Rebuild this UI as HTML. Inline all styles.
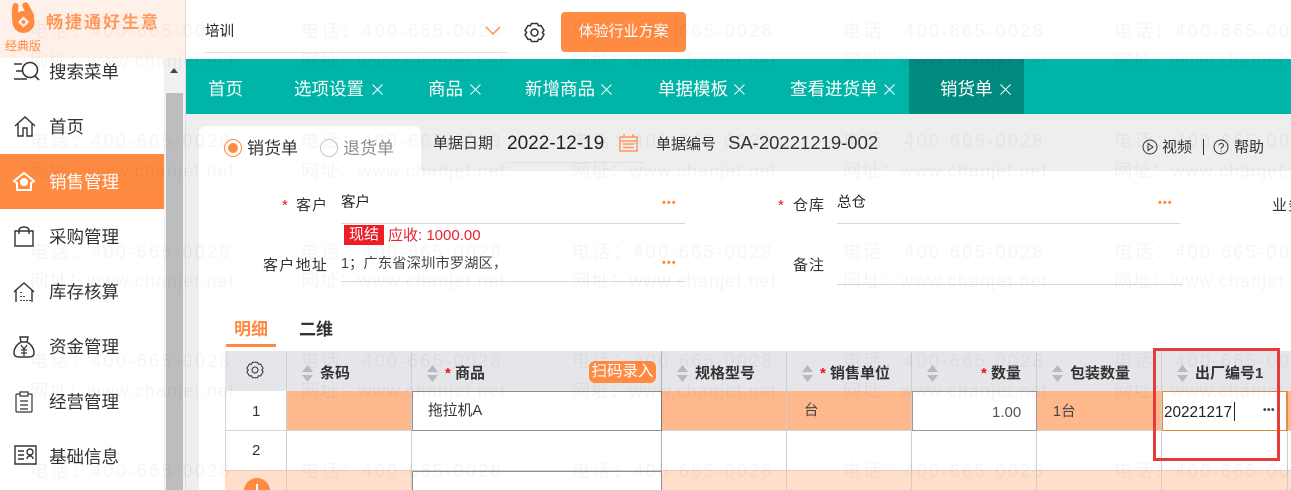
<!DOCTYPE html>
<html lang="zh"><head><meta charset="utf-8"><title>销货单</title>
<style>
*{box-sizing:border-box}
html,body{margin:0;padding:0;width:1291px;height:490px;overflow:hidden;background:#fff}
body{position:relative;font-family:"Liberation Sans","Noto Sans CJK SC",sans-serif;color:#333}
.a{position:absolute}
.t{position:absolute;white-space:nowrap;line-height:1}
.m{position:absolute;left:49px;font-size:17.5px;color:#333;white-space:nowrap;line-height:1}
.ic{position:absolute;fill:none;stroke:#333;stroke-width:1.4}
.tab{position:absolute;top:79px;color:#fff;font-size:17.5px;line-height:20px;white-space:nowrap}
.x{position:absolute;top:84px;fill:none;stroke:#fff;stroke-width:1}
.line{position:absolute;height:1px;background:#d8d8d8}
.dots{position:absolute;color:#ff8a41;font-size:11px;letter-spacing:1px;font-weight:bold;line-height:1}
.hd{position:absolute;top:366px;font-size:15px;font-weight:bold;color:#333;line-height:16px;white-space:nowrap}
.req{color:#f01020;font-weight:bold}
.sort{position:absolute;top:365px;width:11px;height:17px}
.vl{position:absolute;width:1px;background:#d4d4d4}
.wm{position:absolute;color:rgba(0,0,0,.04);font-size:18px;letter-spacing:2.4px;white-space:nowrap;line-height:1}
.wm.w{letter-spacing:1.1px}
.lb{font-size:15px;letter-spacing:1px;color:#333}
</style></head><body>

<!-- sidebar -->
<div class="a" style="left:0;top:0;width:185px;height:58px;background:#fff1e9"></div>
<div class="a" style="left:185px;top:0;width:1px;height:490px;background:#dcdcdc"></div>
<div class="a" style="left:164px;top:58px;width:21px;height:432px;background:#f1f1f1"></div>
<div class="a" style="left:166px;top:93px;width:17px;height:397px;background:#bdbdbd"></div>
<div class="a" style="left:170px;top:68px;width:0;height:0;border-left:4.5px solid transparent;border-right:4.5px solid transparent;border-bottom:5px solid #444"></div>
<div class="a" style="left:0;top:154px;width:164px;height:55px;background:#ff8a41"></div>

<svg class="a" style="left:10px;top:0" width="28" height="36" viewBox="0 0 28 36"><circle cx="13.500" cy="22" r="11" fill="#ff8a41"/><path d="M5.500 6C4.500 11 4.500 16 5.500 23" stroke="#ff8a41" stroke-width="6" stroke-linecap="round" fill="none"/><path d="M15.500 5.500L21 16" stroke="#ff8a41" stroke-width="6.500" stroke-linecap="round" fill="none"/><path d="M13.500 18L17.500 22L13.500 26L9.500 22Z" fill="none" stroke="#fff1e9" stroke-width="2.200"/></svg>
<div class="t" style="left:46px;top:14px;font-size:17px;font-weight:bold;color:#ff9a5c;letter-spacing:2px">畅捷通好生意</div>
<div class="t" style="left:5px;top:40px;font-size:12px;color:#ff8a41">经典版</div>

<svg class="ic" style="left:13px;top:61px" width="27" height="22" viewBox="0 0 27 22"><path d="M1 3H9M3 10H9M1 18H14" stroke-width="1.600"/><circle cx="17" cy="9" r="7.500" stroke-width="1.600"/><path d="M22 15L26 19" stroke-width="1.600"/></svg>
<div class="m" style="top:64px">搜索菜单</div>
<svg class="ic" style="left:14px;top:116px" width="22" height="21" viewBox="0 0 22 21"><path d="M1 10L11 1L21 10M4 8V20H9V12H13V20H18V8"/></svg>
<div class="m" style="top:119px">首页</div>
<svg class="ic" style="left:13px;top:171px;stroke:#fff;stroke-width:2" width="22" height="21" viewBox="0 0 22 21"><path d="M1 10L11 2L21 10L18 12V19H4V12Z"/><circle cx="11" cy="11" r="3.500" fill="#fff" stroke-width="1"/></svg>
<div class="m" style="top:174px;color:#fff">销售管理</div>
<svg class="ic" style="left:14px;top:225px" width="20" height="22" viewBox="0 0 20 22"><path d="M1 6H19V21H1ZM5 9V5C5 1 15 1 15 5V9"/></svg>
<div class="m" style="top:229px">采购管理</div>
<svg class="ic" style="left:13px;top:281px" width="22" height="22" viewBox="0 0 22 22"><path d="M3 21V9L11 2L19 9L21 11M3 9L1 11M19 9V21"/><path d="M8 11V12M8 15V16M8 19V20M11 15V16M11 19V20M14 19V20M17 19V20" stroke-width="1.800"/></svg>
<div class="m" style="top:284px">库存核算</div>
<svg class="ic" style="left:13px;top:336px" width="22" height="22" viewBox="0 0 22 22"><path d="M7 1H15L14 6H8ZM8 6C3 9 1 13 1 17C1 20 3 21 6 21H16C19 21 21 20 21 17C21 13 19 9 14 6"/><path d="M8 9L11 13L14 9M8 14H14M8 17H14M11 13V20" stroke-width="1.200"/></svg>
<div class="m" style="top:339px">资金管理</div>
<svg class="ic" style="left:15px;top:391px" width="18" height="22" viewBox="0 0 18 22"><path d="M5 3H2Q1 3 1 4V20Q1 21 2 21H16Q17 21 17 20V4Q17 3 16 3H13M5 1H13V5H5ZM5 10H13M5 14H13M5 18H13" stroke-width="1.200"/></svg>
<div class="m" style="top:394px">经营管理</div>
<svg class="ic" style="left:14px;top:445px" width="23" height="20" viewBox="0 0 23 20"><path d="M1 1H22V19H1ZM4 6H10M4 10H10M4 14H10M13 14C13 10 19 10 19 14"/><circle cx="16" cy="7" r="3"/></svg>
<div class="m" style="top:449px">基础信息</div>

<!-- top bar -->
<div class="t" style="left:205px;top:25px;font-size:14.500px;color:#222">培训</div>
<div class="line" style="left:205px;top:52px;width:303px;background:#e0e0e8"></div>
<svg class="a" style="left:485px;top:26px" width="16" height="10" viewBox="0 0 16 10" fill="none" stroke="#ff8a41" stroke-width="1.300"><path d="M1 1L8 8L15 1"/></svg>
<svg class="a" style="left:524px;top:22px;fill:none;stroke:#333;stroke-width:1.500" width="21" height="21" viewBox="0 0 21 21"><path d="M7.500 1.500H13.500L14.500 3.800L17 3.500L20 8.500L18.300 10.500L20 12.500L17 17.500L14.500 17.200L13.500 19.500H7.500L6.500 17.200L4 17.500L1 12.500L2.700 10.500L1 8.500L4 3.500L6.500 3.800Z" stroke-linejoin="round"/><circle cx="10.500" cy="10.500" r="3.500"/></svg>
<div class="a" style="left:561px;top:12px;width:125px;height:40px;background:#ff8a41;border-radius:4px;color:#fff;font-size:15px;line-height:40px;text-align:center">体验行业方案</div>

<!-- tabs -->
<div class="a" style="left:186px;top:59px;width:1105px;height:55px;background:#00b5a8"></div>
<div class="a" style="left:909px;top:59px;width:115px;height:55px;background:#008a80"></div>
<div class="tab" style="left:208px">首页</div>
<div class="tab" style="left:294px">选项设置</div>
<svg class="x" style="left:372px" width="11" height="11"><path d="M.5.500L10.500 10.500M10.500.500L.5 10.500"/></svg>
<div class="tab" style="left:428px">商品</div>
<svg class="x" style="left:470px" width="11" height="11"><path d="M.5.500L10.500 10.500M10.500.500L.5 10.500"/></svg>
<div class="tab" style="left:525px">新增商品</div>
<svg class="x" style="left:601px" width="11" height="11"><path d="M.5.500L10.500 10.500M10.500.500L.5 10.500"/></svg>
<div class="tab" style="left:658px">单据模板</div>
<svg class="x" style="left:734px" width="11" height="11"><path d="M.5.500L10.500 10.500M10.500.500L.5 10.500"/></svg>
<div class="tab" style="left:790px">查看进货单</div>
<svg class="x" style="left:884px" width="11" height="11"><path d="M.5.500L10.500 10.500M10.500.500L.5 10.500"/></svg>
<div class="tab" style="left:940px">销货单</div>
<svg class="x" style="left:1000px" width="11" height="11"><path d="M.5.500L10.500 10.500M10.500.500L.5 10.500"/></svg>

<!-- header strip -->
<div class="a" style="left:186px;top:114px;width:1105px;height:57px;background:#eeeeee"></div>
<div class="a" style="left:186px;top:171px;width:13px;height:319px;background:#eeeeee"></div>
<div class="a" style="left:199px;top:126px;width:222px;height:60px;background:#fff;border-radius:7px 7px 0 0"></div>
<div class="a" style="left:224px;top:139px;width:18px;height:18px;border:1.500px solid #ff8a41;border-radius:50%;background:#fff"></div>
<div class="a" style="left:228px;top:143px;width:10px;height:10px;border-radius:50%;background:#ff8a41"></div>
<div class="t" style="left:247px;top:140px;font-size:17px;color:#333">销货单</div>
<div class="a" style="left:320px;top:139px;width:18px;height:18px;border:1px solid #c8c8c8;border-radius:50%;background:#fff"></div>
<div class="t" style="left:343px;top:140px;font-size:17px;color:#8c8c8c">退货单</div>
<div class="t" style="left:433px;top:136px;font-size:15px;color:#333">单据日期</div>
<div class="t" style="left:507px;top:134px;font-size:19px;color:#222">2022-12-19</div>
<svg class="a" style="left:619px;top:134px;fill:none;stroke:#ff9a5c;stroke-width:1.500" width="19" height="18" viewBox="0 0 19 18"><path d="M1 3H18V17H1ZM1 7H18M5 0V4M14 0V4M4 10H15M4 13.500H15"/></svg>
<div class="line" style="left:507px;top:162px;width:136px;background:#e0e0e0"></div>
<div class="t" style="left:656px;top:137px;font-size:15px;color:#333">单据编号</div>
<div class="t" style="left:728px;top:134px;font-size:18.500px;color:#333">SA-20221219-002</div>
<svg class="a" style="left:1142px;top:139px;fill:none;stroke:#333;stroke-width:1" width="16" height="16"><circle cx="8" cy="8" r="7"/><path d="M6 4.500L11 8L6 11.500Z"/></svg>
<div class="t" style="left:1162px;top:140px;font-size:15px;color:#333">视频</div>
<div class="a" style="left:1203px;top:139px;width:1px;height:16px;background:#333"></div>
<svg class="a" style="left:1213px;top:139px;fill:none;stroke:#333;stroke-width:1" width="16" height="16"><circle cx="8" cy="8" r="7"/><path d="M6 6.500C6 3.800 10.500 3.800 10.500 6.500C10.500 8 8 8 8 10M8 11.500V12.500"/></svg>
<div class="t" style="left:1234px;top:140px;font-size:15px;color:#333">帮助</div>

<!-- form -->
<div class="t req" style="left:282px;top:198px;font-size:15px;font-weight:normal">*</div>
<div class="t lb" style="left:296px;top:198px">客户</div>
<div class="t" style="left:341px;top:196px;font-size:14.500px;color:#222">客户</div>
<div class="dots" style="left:662px;top:198px">•••</div>
<div class="line" style="left:341px;top:223px;width:344px"></div>
<div class="t req" style="left:778px;top:198px;font-size:15px;font-weight:normal">*</div>
<div class="t lb" style="left:793px;top:198px">仓库</div>
<div class="t" style="left:837px;top:196px;font-size:14.500px;color:#222">总仓</div>
<div class="dots" style="left:1158px;top:198px">•••</div>
<div class="line" style="left:837px;top:223px;width:343px"></div>
<div class="t lb" style="left:1272px;top:198px">业务员</div>
<div class="a" style="left:344px;top:225px;width:40px;height:20px;background:#ee1c25;color:#fff;font-size:15px;line-height:20px;text-align:center">现结</div>
<div class="t" style="left:388px;top:228px;font-size:15px;color:#e8222e">应收: 1000.00</div>
<div class="t" style="left:263px;top:258px;font-size:15px;letter-spacing:1.300px;color:#333">客户地址</div>
<div class="t" style="left:341px;top:257px;font-size:14.400px;color:#444">1；广东省深圳市罗湖区，</div>
<div class="dots" style="left:662px;top:258px">•••</div>
<div class="line" style="left:341px;top:281px;width:344px"></div>
<div class="t lb" style="left:793px;top:258px">备注</div>
<div class="line" style="left:837px;top:284px;width:345px"></div>

<!-- detail tabs -->
<div class="t" style="left:234px;top:321px;font-size:17px;font-weight:bold;color:#ff8a41">明细</div>
<div class="t" style="left:299px;top:321px;font-size:17px;font-weight:bold;color:#333">二维</div>
<div class="a" style="left:226px;top:344px;width:50px;height:3px;background:#ff8a41"></div>

<!-- table -->
<div class="a" style="left:225px;top:351px;width:1066px;height:40px;background:#e4e6e9"></div>
<div class="a" style="left:225px;top:391px;width:1px;height:99px;background:#d4d4d4"></div>
<div class="a" style="left:287px;top:391px;width:1004px;height:40px;background:#ffb88c"></div>
<div class="a" style="left:225px;top:470px;width:1066px;height:20px;background:#ffdfcb;border-top:1px solid #e2cfc2"></div>
<div class="line" style="left:225px;top:430px;width:1066px;background:#d8d8d8"></div>
<div class="vl" style="left:286px;top:351px;height:139px;background:#cfcfcf"></div>
<div class="vl" style="left:411px;top:351px;height:139px;background:#cfcfcf"></div>
<div class="vl" style="left:661px;top:351px;height:139px;background:#b0b0b0"></div>
<div class="vl" style="left:786px;top:351px;height:139px;background:#cfcfcf"></div>
<div class="vl" style="left:911px;top:351px;height:139px;background:#cfcfcf"></div>
<div class="vl" style="left:1036px;top:351px;height:139px;background:#cfcfcf"></div>
<div class="vl" style="left:1161px;top:351px;height:139px;background:#cfcfcf"></div>
<div class="vl" style="left:1287px;top:391px;height:99px;background:#cfcfcf"></div>

<svg class="a" style="left:246px;top:361px;fill:none;stroke:#333;stroke-width:1.200" width="18" height="18" viewBox="0 0 21 21"><path d="M7.500 1.500H13.500L14.500 3.800L17 3.500L20 8.500L18.300 10.500L20 12.500L17 17.500L14.500 17.200L13.500 19.500H7.500L6.500 17.200L4 17.500L1 12.500L2.700 10.500L1 8.500L4 3.500L6.500 3.800Z" stroke-linejoin="round"/><circle cx="10.500" cy="10.500" r="3.500"/></svg>

<svg class="sort" style="left:302px" viewBox="0 0 11 17" fill="#b8babd"><path d="M5.500 0L11 7H0ZM0 10H11L5.500 17Z"/></svg>
<div class="hd" style="left:320px">条码</div>
<svg class="sort" style="left:427px" viewBox="0 0 11 17" fill="#b8babd"><path d="M5.500 0L11 7H0ZM0 10H11L5.500 17Z"/></svg>
<div class="hd" style="left:445px"><span class="req">*</span> 商品</div>
<div class="a" style="left:589px;top:361px;width:67px;height:22px;background:#ff8a41;border-radius:6px;color:#fff;font-size:15.500px;line-height:22px;text-align:center;white-space:nowrap">扫码录入</div>
<svg class="sort" style="left:677px" viewBox="0 0 11 17" fill="#b8babd"><path d="M5.500 0L11 7H0ZM0 10H11L5.500 17Z"/></svg>
<div class="hd" style="left:695px">规格型号</div>
<svg class="sort" style="left:802px" viewBox="0 0 11 17" fill="#b8babd"><path d="M5.500 0L11 7H0ZM0 10H11L5.500 17Z"/></svg>
<div class="hd" style="left:820px"><span class="req">*</span> 销售单位</div>
<svg class="sort" style="left:927px" viewBox="0 0 11 17" fill="#b8babd"><path d="M5.500 0L11 7H0ZM0 10H11L5.500 17Z"/></svg>
<div class="hd" style="left:981px"><span class="req">*</span> 数量</div>
<svg class="sort" style="left:1052px" viewBox="0 0 11 17" fill="#b8babd"><path d="M5.500 0L11 7H0ZM0 10H11L5.500 17Z"/></svg>
<div class="hd" style="left:1070px">包装数量</div>
<svg class="sort" style="left:1177px" viewBox="0 0 11 17" fill="#b8babd"><path d="M5.500 0L11 7H0ZM0 10H11L5.500 17Z"/></svg>
<div class="hd" style="left:1195px">出厂编号1</div>

<div class="t" style="left:252px;top:404px;font-size:15px;color:#333">1</div>
<div class="t" style="left:252px;top:443px;font-size:15px;color:#333">2</div>
<div class="a" style="left:412px;top:391px;width:250px;height:40px;background:#fff;border:1px solid #8f8f8f;border-right:1px solid #777"></div>
<div class="t" style="left:428px;top:404px;font-size:14.800px;color:#333">拖拉机A</div>
<div class="t" style="left:804px;top:404px;font-size:14.500px;color:#444">台</div>
<div class="a" style="left:912px;top:391px;width:125px;height:40px;background:#fff;border:1px solid #999"></div>
<div class="t" style="left:992px;top:405px;font-size:15px;color:#555">1.00</div>
<div class="t" style="left:1053px;top:405px;font-size:14.500px;color:#444">1台</div>
<div class="a" style="left:1162px;top:391px;width:125px;height:40px;background:#fff;border:1px solid #e08a3c"></div>
<div class="a" style="left:1287px;top:391px;width:1px;height:40px;background:#d89050"></div>
<div class="t" style="left:1164px;top:405px;font-size:15.300px;color:#222">20221217</div>
<div class="a" style="left:1234px;top:402px;width:1px;height:19px;background:#222"></div>
<div class="t" style="left:1263px;top:406px;font-size:10px;font-weight:bold;color:#444;letter-spacing:.5px">•••</div>
<div class="a" style="left:412px;top:471px;width:250px;height:19px;background:#fff;border:1px solid #8f8f8f;border-bottom:none"></div>
<div class="a" style="left:244px;top:478px;width:26px;height:26px;border-radius:50%;background:#ff8a41"></div>
<div class="a" style="left:256px;top:484px;width:2px;height:6px;background:#fff"></div>

<div class="a" style="left:1153px;top:348px;width:127px;height:113px;border:3px solid #e53b3b"></div>

<!-- watermark -->
<div class="wm" style="left:30px;top:22px">电话：400-665-0028</div><div class="wm" style="left:301px;top:22px">电话：400-665-0028</div><div class="wm" style="left:572px;top:22px">电话：400-665-0028</div><div class="wm" style="left:843px;top:22px">电话：400-665-0028</div><div class="wm" style="left:1114px;top:22px">电话：400-665-0028</div>
<div class="wm w" style="left:30px;top:52px">网址：www.chanjet.net</div><div class="wm w" style="left:301px;top:52px">网址：www.chanjet.net</div><div class="wm w" style="left:572px;top:52px">网址：www.chanjet.net</div><div class="wm w" style="left:843px;top:52px">网址：www.chanjet.net</div><div class="wm w" style="left:1114px;top:52px">网址：www.chanjet.net</div>
<div class="wm" style="left:30px;top:132px">电话：400-665-0028</div><div class="wm" style="left:301px;top:132px">电话：400-665-0028</div><div class="wm" style="left:572px;top:132px">电话：400-665-0028</div><div class="wm" style="left:843px;top:132px">电话：400-665-0028</div><div class="wm" style="left:1114px;top:132px">电话：400-665-0028</div>
<div class="wm w" style="left:30px;top:162px">网址：www.chanjet.net</div><div class="wm w" style="left:301px;top:162px">网址：www.chanjet.net</div><div class="wm w" style="left:572px;top:162px">网址：www.chanjet.net</div><div class="wm w" style="left:843px;top:162px">网址：www.chanjet.net</div><div class="wm w" style="left:1114px;top:162px">网址：www.chanjet.net</div>
<div class="wm" style="left:30px;top:243px">电话：400-665-0028</div><div class="wm" style="left:301px;top:243px">电话：400-665-0028</div><div class="wm" style="left:572px;top:243px">电话：400-665-0028</div><div class="wm" style="left:843px;top:243px">电话：400-665-0028</div><div class="wm" style="left:1114px;top:243px">电话：400-665-0028</div>
<div class="wm w" style="left:30px;top:272px">网址：www.chanjet.net</div><div class="wm w" style="left:301px;top:272px">网址：www.chanjet.net</div><div class="wm w" style="left:572px;top:272px">网址：www.chanjet.net</div><div class="wm w" style="left:843px;top:272px">网址：www.chanjet.net</div><div class="wm w" style="left:1114px;top:272px">网址：www.chanjet.net</div>
<div class="wm" style="left:30px;top:352px">电话：400-665-0028</div><div class="wm" style="left:301px;top:352px">电话：400-665-0028</div><div class="wm" style="left:572px;top:352px">电话：400-665-0028</div><div class="wm" style="left:843px;top:352px">电话：400-665-0028</div><div class="wm" style="left:1114px;top:352px">电话：400-665-0028</div>
<div class="wm w" style="left:30px;top:382px">网址：www.chanjet.net</div><div class="wm w" style="left:301px;top:382px">网址：www.chanjet.net</div><div class="wm w" style="left:572px;top:382px">网址：www.chanjet.net</div><div class="wm w" style="left:843px;top:382px">网址：www.chanjet.net</div><div class="wm w" style="left:1114px;top:382px">网址：www.chanjet.net</div>
<div class="wm" style="left:30px;top:462px">电话：400-665-0028</div><div class="wm" style="left:301px;top:462px">电话：400-665-0028</div><div class="wm" style="left:572px;top:462px">电话：400-665-0028</div><div class="wm" style="left:843px;top:462px">电话：400-665-0028</div><div class="wm" style="left:1114px;top:462px">电话：400-665-0028</div>
</body></html>
